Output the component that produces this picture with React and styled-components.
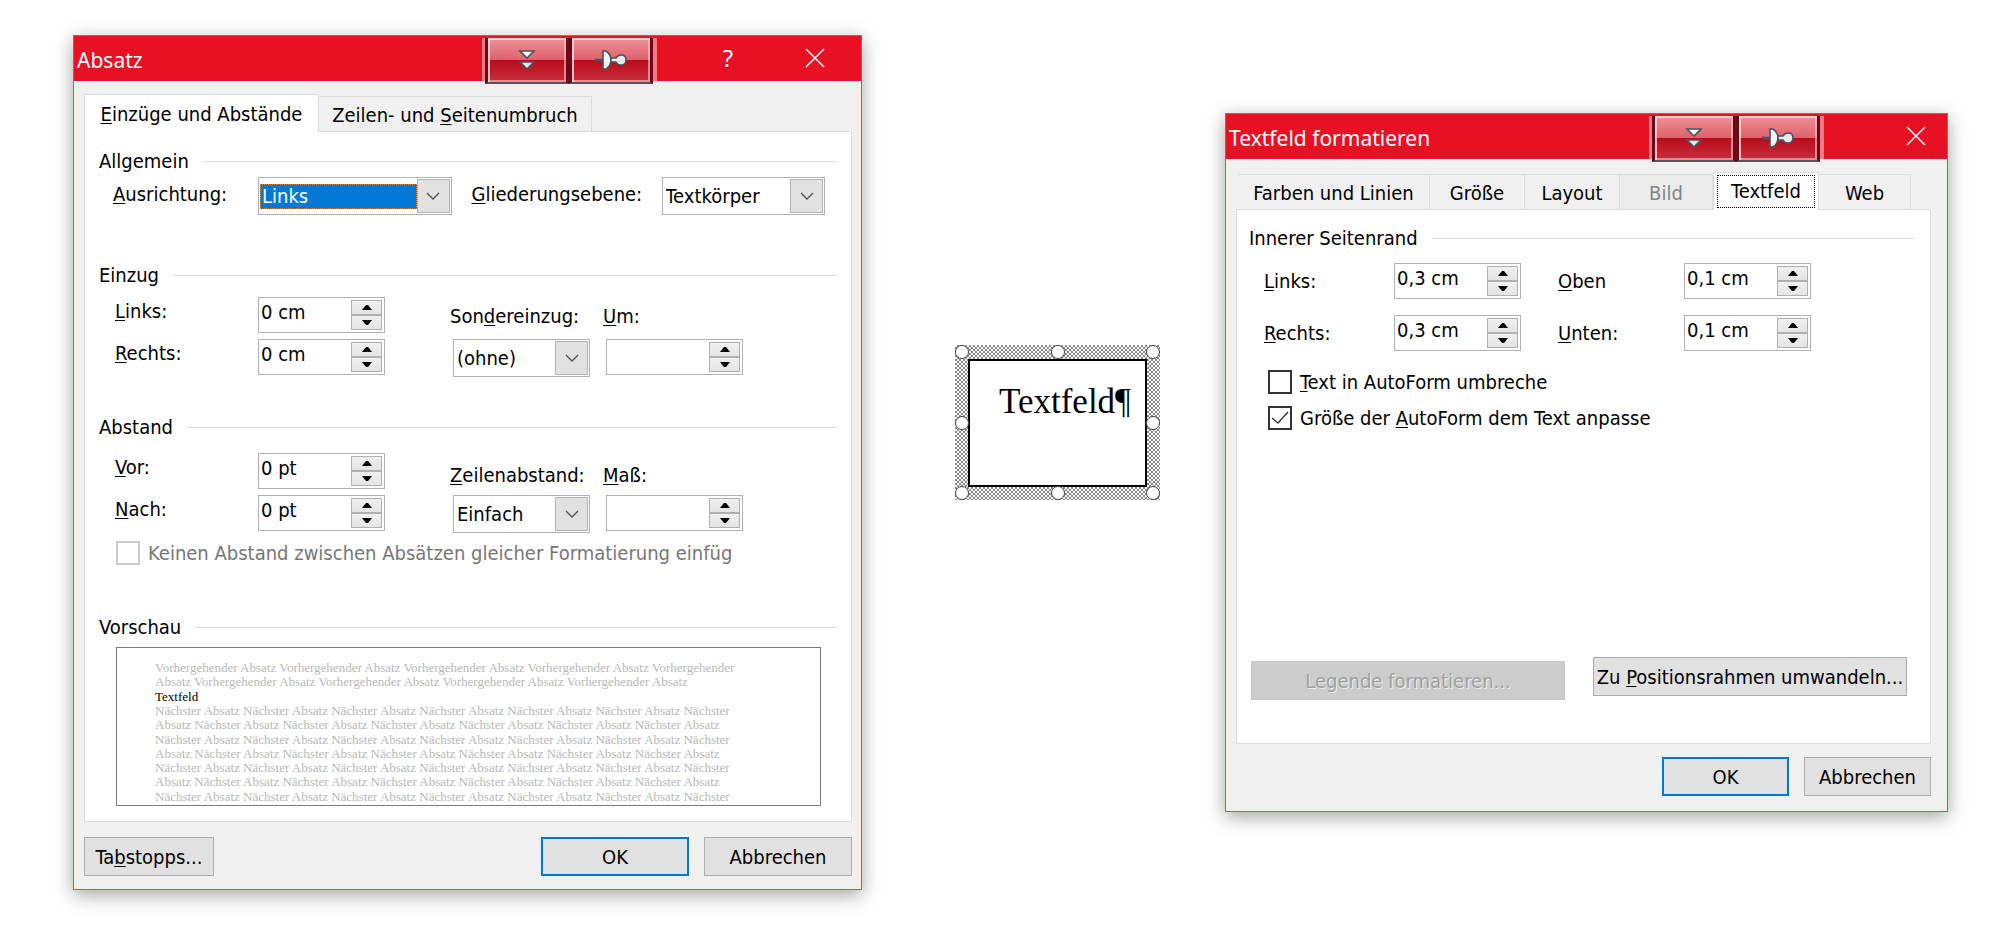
import React, { useState } from 'react';
import styled, { createGlobalStyle, css } from 'styled-components';

const GlobalStyle = createGlobalStyle`
  * {
    box-sizing: border-box;
  }

  body {
    margin: 0;
    background: #fff;
    color: #000;
    font-family: "DejaVu Sans Condensed", "DejaVu Sans", sans-serif;
    font-size: 20px;
  }

  button, input, select {
    margin: 0;
    padding: 0;
    border: none;
    border-radius: 0;
    outline: none;
    color: inherit;
    font: inherit;
  }

  u {
    text-decoration-thickness: 1px;
    text-underline-offset: 2px;
    text-decoration-skip-ink: none;
  }
`;

const Desktop = styled.main`
  display: grid;
  grid-template-columns: minmax(760px, 789fr) auto minmax(700px, 723fr);
  align-items: start;
  padding: 35px 52px 45px 73px;
`;

const Lowered = styled.div`
  padding-top: 78px;
`;

/* Dialog */

const Window = styled.section`
  border: 1px solid #e0495a;
  background: #f0f0f0;
  box-shadow: 0 5px 18px rgba(0, 0, 0, 0.36);
`;

const TitleBar = styled.header`
  display: flex;
  align-items: flex-start;
  height: 45px;
  padding: 2px ${(p) => p.$right}px 0 3px;
  background: #e81123;
  color: #fff;
`;

const Title = styled.h1`
  flex: 1;
  margin: 0;
  font-family: "Noto Sans", sans-serif;
  font-size: 21px;
  font-weight: 400;
  line-height: 44px;
`;

const CaptionButton = styled.button`
  display: grid;
  place-items: center;
  width: 60px;
  height: 40px;
  background: none;
  font-family: "Noto Sans", sans-serif;
  font-size: 25px;
  line-height: 40px;
`;

const HelpButton = styled(CaptionButton)`
  margin-right: 27px;
  font-family: "Open Sans", sans-serif;
  font-size: 24px;
`;

const GlassGroup = styled.div`
  display: flex;
  height: 47px;
  margin-right: ${(p) => p.$gap}px;
  padding-bottom: 1px;
  border: solid rgba(255, 225, 228, 0.5);
  border-width: 0 4px 0 3px;
`;

const GlassButton = styled.button`
  display: grid;
  place-items: center;
  width: 84px;
  height: 46px;
  border: solid #6b0a16;
  border-width: 0 3px 2px;
  border-bottom-color: #55565a;
  background: linear-gradient(#ee9298, #e0606a 50%, #b90b1a 51%, #c8303f);
  box-shadow: inset 2px 2px 0 rgba(255, 225, 228, 0.8), inset -2px -2px 0 rgba(255, 200, 205, 0.6);
`;

const Body = styled.div`
  padding: 13px ${(p) => p.$side}px ${(p) => p.$bottom}px 10px;
`;

const TabBar = styled.div`
  display: flex;
  align-items: flex-end;
  height: 37px;
  padding-left: ${(p) => p.$inset}px;
`;

const Tab = styled.button`
  width: ${(p) => p.$width}px;
  height: 35px;
  padding-top: 2px;
  border: solid #dcdcdc;
  border-width: 1px 1px 0 0;
  background: #f0f0f0;
  white-space: nowrap;

  &:disabled {
    background: #ececec;
    color: #838383;
  }

  ${(p) => p.$active && css`
    position: relative;
    height: 38px;
    margin-bottom: -1px;
    padding-top: 0;
    border-left-width: 1px;
    background: #fff;
  `}
`;

const FocusRing = styled.span`
  display: block;
  margin: 0 3px;
  border: 1px dotted #000;
  line-height: 31px;
`;

const Panel = styled.div`
  padding: ${(p) => p.$pad};
  border: 1px solid #dcdcdc;
  background: #fff;
`;

const Heading = styled.h2`
  display: flex;
  align-items: center;
  gap: 14px;
  margin: ${(p) => p.$top || 0}px 0 ${(p) => p.$bottom}px;
  font-size: 20px;
  font-weight: 400;
  line-height: 26px;

  &::after {
    content: "";
    flex: 1;
    height: 1px;
    background: #dfdfdf;
  }
`;

const Footer = styled.footer`
  display: flex;
  justify-content: flex-end;
  gap: 15px;
  margin-top: ${(p) => p.$top}px;
`;

const PushButton = styled.button`
  width: ${(p) => p.$width}px;
  height: 39px;
  border: 1px solid #adadad;
  background: #e1e1e1;
  white-space: nowrap;

  ${(p) => p.$primary && css`
    border: 2px solid #0078d7;
  `}

  ${(p) => p.$first && css`
    margin-right: auto;
  `}

  &:disabled {
    border-color: #c6c6c6;
    background: #ccc;
    color: #a0a0a0;
    text-shadow: 1px 1px 0 #eee;
  }
`;

/* Form parts */

const Label = styled.label`
  line-height: ${(p) => p.$line || 28}px;
  white-space: nowrap;
`;

const AlignRow = styled.div`
  display: grid;
  grid-template-columns: 145px 193fr 210px 163fr;
  padding: 0 12px 0 14px;
`;

const SecondLabel = styled(Label)`
  padding-left: 20px;
`;

const Columns = styled.div`
  display: flex;
  gap: 65px;
  padding-left: 14px;
`;

const FieldGrid = styled.div`
  display: grid;
  grid-template-columns: 145px 127px;
  grid-template-rows: 36px 38px;
  row-gap: 6px;
  align-items: start;

  > label {
    padding-left: 2px;
  }
`;

const StackGrid = styled.div`
  display: grid;
  grid-template-columns: 140px 140px;
  grid-template-rows: 36px 38px;
  gap: 6px 13px;
  align-items: start;

  > label {
    align-self: end;
  }

  > div {
    margin-left: 3px;
  }
`;

const MarginGrid = styled.div`
  display: grid;
  grid-template-columns: 130px 127px 163px 127px;
  gap: 16px 0;
  padding-left: 15px;

  > label:nth-of-type(even) {
    padding-left: 37px;
  }
`;

const ComboBox = styled.div`
  display: flex;
  align-items: center;
  position: relative;
  height: 38px;
  padding: 1px;
  border: 1px solid #b0b0b6;
  background: #fff;
`;

const ComboSelect = styled.select`
  flex: 1;
  min-width: 0;
  height: 25px;
  margin-right: 33px;
  padding-left: 2px;
  appearance: none;
  background: #fff;

  ${(p) => p.$focused && css`
    outline: 1px dotted #c98645;
    outline-offset: -1px;
    background: #0078d7;
    color: #fff;
  `}
`;

const ComboArrow = styled.span`
  position: absolute;
  top: 1px;
  right: 1px;
  bottom: 1px;
  display: grid;
  place-items: center;
  width: 33px;
  border: 1px solid #b4b4b4;
  background: #e1e1e1;
  pointer-events: none;
`;

const SpinBox = styled.div`
  display: flex;
  height: 36px;
  padding: 2px;
  border: 1px solid #b0b0b6;
  background: #fff;
`;

const SpinInput = styled.input`
  flex: 1;
  min-width: 0;
  height: 24px;
  background: #fff;
`;

const SpinButtons = styled.div`
  display: grid;
  grid-template-rows: 1fr 1fr;
  width: 31px;
`;

const SpinButton = styled.button`
  display: grid;
  place-items: center;
  border: 1px solid #b0b0b0;
  background: linear-gradient(#f0f0f0, #e4e4e4);
`;

const CheckLabel = styled.label`
  display: flex;
  align-items: center;
  gap: 8px;
  margin-top: ${(p) => p.$top}px;
  margin-left: ${(p) => p.$left}px;
  line-height: 24px;
  color: ${(p) => (p.$disabled ? '#777' : '#000')};
`;

const CheckBox = styled.span`
  display: grid;
  width: 24px;
  height: 24px;

  > * {
    grid-area: 1 / 1;
  }
`;

const CheckInput = styled.input`
  appearance: none;
  border: 2px solid #333;
  background: #fff;

  &:disabled {
    border-color: #ccc;
  }
`;

const Preview = styled.div`
  display: grid;
  grid-auto-rows: 1fr;
  height: 159px;
  margin: 0 16px 0 17px;
  padding: 13px 0 1px 38px;
  overflow: hidden;
  border: 1px solid #7a7a7a;
  color: #b8b8b8;
  font-family: "Liberation Serif", serif;
  font-size: 13px;
  line-height: 14px;
  white-space: nowrap;
`;

const PreviewCurrent = styled.span`
  color: #000;
`;

const PanelButtons = styled.div`
  display: flex;
  gap: 28px;
  height: 43px;
  margin-top: 227px;
  padding-left: 2px;

  > :first-child {
    align-self: flex-end;
  }
`;

/* Selected text box on the page */

const Frame = styled.div`
  position: relative;
  width: 205px;
  height: 155px;
  margin: 310px 65px 0 93px;
  padding: 14px 13px 13px;
  background: repeating-conic-gradient(#8a8a8a 0 25%, #f8f8f8 0 50%) 0 0 / 4px 4px;
`;

const FrameText = styled.div`
  height: 100%;
  padding: 18px 0 0 29px;
  border: 2px solid #000;
  background: #fff;
  font-family: "Liberation Serif", serif;
  font-size: 35px;
  line-height: 46px;
`;

const Handle = styled.span`
  position: absolute;
  top: ${(p) => p.$y}%;
  left: ${(p) => p.$x}%;
  width: 14px;
  height: 14px;
  margin: -${(p) => p.$y * 14 / 100}px 0 0 -${(p) => p.$x * 14 / 100}px;
  border: 1px solid #444;
  border-radius: 50%;
  background: #fff;
`;

const handles = [[0, 0], [50, 0], [100, 0], [0, 50], [100, 50], [0, 100], [50, 100], [100, 100]];

const before = [
  'Vorhergehender Absatz Vorhergehender Absatz Vorhergehender Absatz Vorhergehender Absatz Vorhergehender',
  'Absatz Vorhergehender Absatz Vorhergehender Absatz Vorhergehender Absatz Vorhergehender Absatz',
];
const nextA = 'Nächster Absatz Nächster Absatz Nächster Absatz Nächster Absatz Nächster Absatz Nächster Absatz Nächster';
const nextB = 'Absatz Nächster Absatz Nächster Absatz Nächster Absatz Nächster Absatz Nächster Absatz Nächster Absatz';
const after = [nextA, nextB, nextA, nextB, nextA, nextB, nextA];

function CloseIcon() {
  return (
    <svg width="20" height="20" viewBox="0 0 20 20" fill="none" stroke="#fff" strokeWidth="1.5">
      <path d="M1 1l18 18M19 1L1 19" />
    </svg>
  );
}

function RollUpIcon() {
  return (
    <svg width="18" height="22" viewBox="0 0 18 22" stroke="#4b5360" strokeWidth="1.6">
      <path d="M2 2h14l-7 7z" fill="#fff" />
      <path d="M2 13h14l-7 7z" fill="#e4e4e4" />
    </svg>
  );
}

function PinIcon() {
  return (
    <svg width="34" height="22" viewBox="0 0 34 22" stroke="#4b5360" strokeWidth="1.6">
      <path d="M1 11h8" strokeWidth="2.6" />
      <path d="M9 2h3c3 2 5 5 5 9s-2 7-5 9H9z" fill="#f2f2f2" />
      <path d="M17 9h5c1-2 3-3 5-3 3 0 5 2 5 5s-2 5-5 5c-2 0-4-1-5-3h-5z" fill="#e8e8e8" />
    </svg>
  );
}

function Dialog({ title, right, gap, help, children }) {
  return (
    <Window aria-label={title}>
      <TitleBar $right={right}>
        <Title>{title}</Title>
        <GlassGroup $gap={gap}>
          <GlassButton type="button" aria-label="Einrollen"><RollUpIcon /></GlassButton>
          <GlassButton type="button" aria-label="Anheften"><PinIcon /></GlassButton>
        </GlassGroup>
        {help && <HelpButton type="button">?</HelpButton>}
        <CaptionButton type="button" aria-label="Schließen"><CloseIcon /></CaptionButton>
      </TitleBar>
      {children}
    </Window>
  );
}

function Combo({ id, options, focused }) {
  const [value, setValue] = useState(options[0]);

  return (
    <ComboBox>
      <ComboSelect id={id} value={value} $focused={focused} onChange={(e) => setValue(e.target.value)}>
        {options.map((o) => <option key={o}>{o}</option>)}
      </ComboSelect>
      <ComboArrow>
        <svg width="14" height="8" viewBox="0 0 14 8" fill="none" stroke="#505050" strokeWidth="1.3">
          <path d="M1 1l6 6 6-6" />
        </svg>
      </ComboArrow>
    </ComboBox>
  );
}

function Spinner({ id, initial = '', step = 1 }) {
  const [value, setValue] = useState(initial);

  const change = (delta) => {
    const [num, unit = 'cm'] = value.split(' ');
    const next = (parseFloat(num.replace(',', '.')) || 0) + delta;
    setValue(`${String(Math.round(next * 10) / 10).replace('.', ',')} ${unit}`);
  };

  return (
    <SpinBox>
      <SpinInput id={id} type="text" value={value} onChange={(e) => setValue(e.target.value)} />
      <SpinButtons>
        <SpinButton type="button" aria-label="Mehr" onClick={() => change(step)}>
          <svg width="10" height="5" viewBox="0 0 10 5"><path d="M0 5l4-5h2l4 5z" /></svg>
        </SpinButton>
        <SpinButton type="button" aria-label="Weniger" onClick={() => change(-step)}>
          <svg width="10" height="5" viewBox="0 0 10 5"><path d="M0 0l4 5h2l4-5z" /></svg>
        </SpinButton>
      </SpinButtons>
    </SpinBox>
  );
}

function Check({ initial = false, disabled, top, left, children }) {
  const [checked, setChecked] = useState(initial);

  return (
    <CheckLabel $disabled={disabled} $top={top} $left={left}>
      <CheckBox>
        <CheckInput type="checkbox" checked={checked} disabled={disabled} onChange={(e) => setChecked(e.target.checked)} />
        {checked && (
          <svg width="24" height="24" viewBox="0 0 24 24" fill="none" stroke="#333" strokeWidth="1.4" pointerEvents="none">
            <path d="M4 12l6 5L20 6" />
          </svg>
        )}
      </CheckBox>
      <span>{children}</span>
    </CheckLabel>
  );
}

function ParagraphDialog() {
  return (
    <Dialog title="Absatz" right={16} gap={41} help>
      <Body $side={9} $bottom={13}>
        <TabBar role="tablist" $inset={0}>
          <Tab type="button" role="tab" aria-selected="true" $active $width={235}><u>E</u>inzüge und Abstände</Tab>
          <Tab type="button" role="tab" aria-selected="false" $width={273}>Zeilen- und <u>S</u>eitenumbruch</Tab>
        </TabBar>
        <Panel $pad="16px 14px 15px 14px">
          <Heading $bottom={3}>Allgemein</Heading>
          <AlignRow>
            <Label htmlFor="ausrichtung" $line={34}><u>A</u>usrichtung:</Label>
            <Combo id="ausrichtung" options={['Links', 'Zentriert', 'Rechts', 'Block']} focused />
            <SecondLabel htmlFor="ebene" $line={34}><u>G</u>liederungsebene:</SecondLabel>
            <Combo id="ebene" options={['Textkörper', 'Ebene 1', 'Ebene 2']} />
          </AlignRow>

          <Heading $top={47} $bottom={9}>Einzug</Heading>
          <Columns>
            <FieldGrid>
              <Label htmlFor="einzugLinks"><u>L</u>inks:</Label>
              <Spinner id="einzugLinks" initial="0 cm" />
              <Label htmlFor="einzugRechts"><u>R</u>echts:</Label>
              <Spinner id="einzugRechts" initial="0 cm" />
            </FieldGrid>
            <StackGrid>
              <Label htmlFor="sondereinzug" $line={34}>Son<u>d</u>ereinzug:</Label>
              <Label htmlFor="um" $line={34}><u>U</u>m:</Label>
              <Combo id="sondereinzug" options={['(ohne)', 'Erste Zeile', 'Hängend']} />
              <Spinner id="um" />
            </StackGrid>
          </Columns>

          <Heading $top={37} $bottom={13}>Abstand</Heading>
          <Columns>
            <FieldGrid>
              <Label htmlFor="vor"><u>V</u>or:</Label>
              <Spinner id="vor" initial="0 pt" step={6} />
              <Label htmlFor="nach"><u>N</u>ach:</Label>
              <Spinner id="nach" initial="0 pt" step={6} />
            </FieldGrid>
            <StackGrid>
              <Label htmlFor="zeilenabstand"><u>Z</u>eilenabstand:</Label>
              <Label htmlFor="mass"><u>M</u>aß:</Label>
              <Combo id="zeilenabstand" options={['Einfach', '1,5 Zeilen', 'Doppelt']} />
              <Spinner id="mass" />
            </StackGrid>
          </Columns>
          <Check disabled top={8} left={17}>Keinen Abstand zwischen Absätzen gleicher Formatierung einfüg</Check>

          <Heading $top={49} $bottom={7}>Vorschau</Heading>
          <Preview>
            {before.map((line, i) => <span key={i}>{line}</span>)}
            <PreviewCurrent>Textfeld</PreviewCurrent>
            {after.map((line, i) => <span key={i}>{line}</span>)}
          </Preview>
        </Panel>
        <Footer $top={15}>
          <PushButton type="button" $width={130} $first>Ta<u>b</u>stopps...</PushButton>
          <PushButton type="button" $width={148} $primary>OK</PushButton>
          <PushButton type="button" $width={148}>Abbrechen</PushButton>
        </Footer>
      </Body>
    </Dialog>
  );
}

function TextBoxDialog() {
  return (
    <Dialog title="Textfeld formatieren" right={1} gap={62}>
      <Body $side={16} $bottom={15}>
        <TabBar role="tablist" $inset={2}>
          <Tab type="button" role="tab" aria-selected="false" $width={192}>Farben und Linien</Tab>
          <Tab type="button" role="tab" aria-selected="false" $width={95}>Größe</Tab>
          <Tab type="button" role="tab" aria-selected="false" $width={95}>Layout</Tab>
          <Tab type="button" role="tab" aria-selected="false" $width={93} disabled>Bild</Tab>
          <Tab type="button" role="tab" aria-selected="true" $active $width={106}><FocusRing>Textfeld</FocusRing></Tab>
          <Tab type="button" role="tab" aria-selected="false" $width={92}>Web</Tab>
        </TabBar>
        <Panel $pad="15px 15px 43px 12px">
          <Heading $bottom={12}>Innerer Seitenrand</Heading>
          <MarginGrid>
            <Label htmlFor="randLinks" $line={36}><u>L</u>inks:</Label>
            <Spinner id="randLinks" initial="0,3 cm" step={0.1} />
            <Label htmlFor="randOben" $line={36}><u>O</u>ben</Label>
            <Spinner id="randOben" initial="0,1 cm" step={0.1} />
            <Label htmlFor="randRechts" $line={36}><u>R</u>echts:</Label>
            <Spinner id="randRechts" initial="0,3 cm" step={0.1} />
            <Label htmlFor="randUnten" $line={36}><u>U</u>nten:</Label>
            <Spinner id="randUnten" initial="0,1 cm" step={0.1} />
          </MarginGrid>
          <Check top={19} left={19}><u>T</u>ext in AutoForm umbreche</Check>
          <Check top={12} left={19} initial>Größe der <u>A</u>utoForm dem Text anpasse</Check>
          <PanelButtons>
            <PushButton type="button" $width={314} disabled>Legende formatieren...</PushButton>
            <PushButton type="button" $width={314}>Zu <u>P</u>ositionsrahmen umwandeln...</PushButton>
          </PanelButtons>
        </Panel>
        <Footer $top={13}>
          <PushButton type="button" $width={127} $primary>OK</PushButton>
          <PushButton type="button" $width={127}>Abbrechen</PushButton>
        </Footer>
      </Body>
    </Dialog>
  );
}

export default function App() {
  return (
    <>
      <GlobalStyle />
      <Desktop>
        <ParagraphDialog />
        <Frame>
          <FrameText>Textfeld¶</FrameText>
          {handles.map(([x, y]) => <Handle key={`${x}-${y}`} $x={x} $y={y} />)}
        </Frame>
        <Lowered>
          <TextBoxDialog />
        </Lowered>
      </Desktop>
    </>
  );
}
